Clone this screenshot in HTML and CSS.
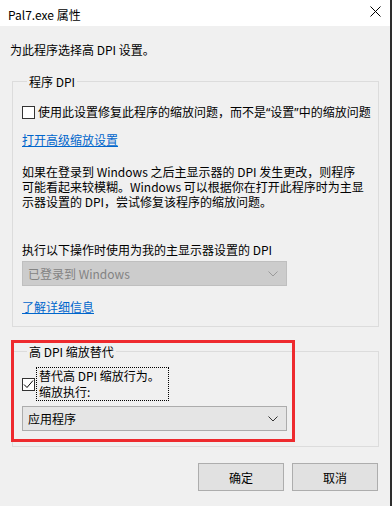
FILE: index.html
```html
<!DOCTYPE html>
<html>
<head>
<meta charset="utf-8">
<link rel="stylesheet" href="styles.css">
</head>
<body>
<div class="window">
  <div class="titlebar">
    <span class="title">Pal7.exe 属性</span>
    <svg class="close" width="11" height="11" viewBox="0 0 11 11"><path d="M0.5 0.5 L10.5 10.5 M10.5 0.5 L0.5 10.5" stroke="#000" stroke-width="1" fill="none"/></svg>
  </div>
  <div class="content">
    <p class="intro">为此程序选择高 DPI 设置。</p>
    <fieldset class="group group1">
      <legend>程序 DPI</legend>
      <div class="check-row">
        <span class="checkbox"></span>
        <span class="check-label">使用此设置修复此程序的缩放问题，而不是<span class="q">“</span>设置<span class="q">”</span>中的缩放问题</span>
      </div>
      <a class="link link1" href="#">打开高级缩放设置</a>
      <p class="para">如果在登录到 Windows 之后主显示器的 DPI 发生更改，则程序<br>可能看起来较模糊。Windows 可以根据你在打开此程序时为主显<br>示器设置的 DPI，尝试修复该程序的缩放问题。</p>
      <p class="label-dpi">执行以下操作时使用为我的主显示器设置的 DPI</p>
      <div class="select disabled">
        <span>已登录到 Windows</span>
        <svg width="10" height="6" viewBox="0 0 10 6"><polyline points="0.5,0.5 5,5 9.5,0.5" fill="none" stroke="#9a9a9a" stroke-width="1"/></svg>
      </div>
      <a class="link link2" href="#">了解详细信息</a>
    </fieldset>
    <fieldset class="group group2">
      <legend>高 DPI 缩放替代</legend>
      <div class="check-row2">
        <span class="checkbox checked"><svg width="11" height="11" viewBox="0 0 11 11"><polyline points="1,5.5 4,8.5 10,1.5" fill="none" stroke="#000" stroke-width="1"/></svg></span>
        <span class="focus-label">替代高 DPI 缩放行为。<br>缩放执行:</span>
      </div>
      <div class="select active">
        <span>应用程序</span>
        <svg width="10" height="6" viewBox="0 0 10 6"><polyline points="0.5,0.5 5,5 9.5,0.5" fill="none" stroke="#333" stroke-width="1"/></svg>
      </div>
    </fieldset>
    <div class="buttons">
      <button class="btn">确定</button>
      <button class="btn">取消</button>
    </div>
  </div>
  <div class="highlight"></div>
</div>
</body>
</html>
```
FILE: styles.css
```css
html, body {
  margin: 0;
  padding: 0;
}
body {
  width: 392px;
  height: 506px;
  overflow: hidden;
  background: #f0f0f0;
  font-family: "Noto Sans CJK SC", "Noto Sans", sans-serif;
  font-size: 12px;
  color: #000;
}
.window {
  position: relative;
  width: 390px;
  height: 506px;
  border-right: 2px solid #2e2e2e;
  background: #f0f0f0;
}
.titlebar {
  height: 26px;
  background: #fff;
  display: flex;
  align-items: center;
  justify-content: space-between;
  padding: 0 9px 0 8px;
}
.title {
  font-size: 12px;
  line-height: 15px;
  margin-top: 2px;
}
.close {
  margin-top: -4px;
}
.intro {
  margin: 0;
  padding: 16px 0 0 10px;
  line-height: 15px;
}
.group {
  margin: 17px 0 0 12px;
  width: 367px;
  box-sizing: border-box;
  border: 1px solid #dcdcdc;
  padding: 0 8px 0 9px;
  min-width: 0;
}
.group legend {
  padding: 0 2px;
  margin-left: 5px;
  line-height: 15px;
}
.group1 {
  padding-bottom: 12px;
}
.check-row {
  display: flex;
  align-items: center;
  margin-top: 15px;
  line-height: 15px;
}
.checkbox {
  width: 13px;
  height: 13px;
  box-sizing: border-box;
  border: 1px solid #333;
  background: #fff;
  flex: none;
  display: flex;
  align-items: center;
  justify-content: center;
}
.check-label {
  margin-left: 3px;
  white-space: nowrap;
}
.q {
  font-family: "Noto Sans", "DejaVu Sans", sans-serif;
}
.link {
  display: block;
  width: max-content;
  color: #0066cc;
  text-decoration: underline;
  line-height: 15px;
}
.link1 {
  margin-top: 12px;
}
.para {
  margin: 17px 0 0 0;
  line-height: 15px;
  white-space: nowrap;
}
.label-dpi {
  margin: 33px 0 0 0;
  line-height: 15px;
}
.select {
  margin-top: 4px;
  width: 265px;
  height: 25px;
  box-sizing: border-box;
  display: flex;
  align-items: center;
  justify-content: space-between;
  padding: 0 8px 0 5px;
}
.select.disabled {
  background: #cccccc;
  border: 1px solid #bfbfbf;
  color: #838383;
}
.select.active {
  background: #e5e5e5;
  border: 1px solid #acacac;
  margin-top: 5px;
}
.link2 {
  margin-top: 13px;
}
.group2 {
  padding-bottom: 15px;
}
.check-row2 {
  display: flex;
  align-items: center;
  margin-top: 8px;
}
.focus-label {
  margin-left: 1px;
  border: 1px dotted #000;
  padding: 0 8px 0 2px;
  line-height: 16px;
}
.buttons {
  display: flex;
  justify-content: flex-end;
  gap: 8px;
  padding-right: 12px;
  margin-top: 16px;
}
.btn {
  width: 86px;
  height: 28px;
  background: #e1e1e1;
  border: 1px solid #adadad;
  font-family: "Noto Sans CJK SC", "Noto Sans", sans-serif;
  font-size: 12px;
  color: #000;
  padding: 0;
  margin: 0;
}
.highlight {
  position: absolute;
  left: 11px;
  top: 340px;
  width: 284px;
  height: 102px;
  box-sizing: border-box;
  border: 3px solid #ee2a2e;
  pointer-events: none;
}
```
